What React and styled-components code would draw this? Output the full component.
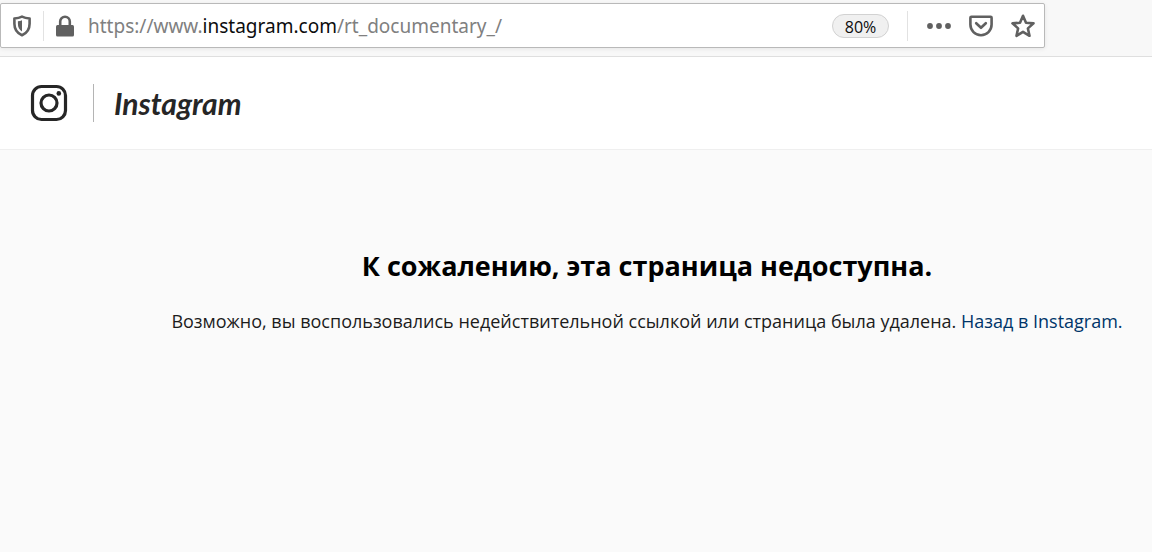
import React, { useState } from 'react'
import styled, { createGlobalStyle } from 'styled-components'

const GlobalStyle = createGlobalStyle`
    * {
        box-sizing: border-box;
    }
    body {
        margin: 0;
        background: #fafafa;
        color: #000;
        font-family: "Open Sans", "Noto Sans", sans-serif;
    }
    button {
        padding: 0;
        border: 0;
        background: none;
        font: inherit;
        cursor: pointer;
    }
`

const Toolbar = styled.div`
    height: 57px;
    padding: 3px 107px 0 0;
    background: #f8f8f8;
    border-bottom: 1px solid #dfdfdf;
`
const UrlBar = styled.div`
    display: flex;
    align-items: center;
    height: 45px;
    padding: 0 0 0 10px;
    background: #fff;
    border: 1px solid #b9b9b9;
    border-radius: 2px;
    box-shadow: 0 1px 4px rgba(0, 0, 0, 0.08);
`
const IconButton = styled.button`
    display: flex;
    flex: none;
    align-items: center;
    justify-content: center;
    width: ${({ $width }) => $width}px;
    height: 32px;
    color: #606060;
`
const Separator = styled.span`
    flex: none;
    width: 1px;
    height: 30px;
    margin: 0 ${({ $after }) => $after}px 0 ${({ $before }) => $before}px;
    background: #e2e2e2;
`
const UrlField = styled.label`
    display: grid;
    flex: 1;
    min-width: 0;
    margin-left: 12px;
    font-family: "Noto Sans", "Open Sans", sans-serif;
    font-size: 19px;
    line-height: 28px;

    > * {
        grid-area: 1 / 1;
    }
`
const UrlText = styled.span`
    overflow: hidden;
    color: #808080;
    white-space: nowrap;
    visibility: ${({ $hidden }) => ($hidden ? 'hidden' : 'visible')};
`
const Domain = styled.span`
    color: #0c0c0d;
`
const UrlInput = styled.input`
    width: 100%;
    padding: 0;
    border: 0;
    outline: 0;
    background: transparent;
    color: #0c0c0d;
    font: inherit;
`
const ZoomButton = styled.button`
    && {
        flex: none;
        width: 57px;
        height: 24px;
        background: #f0f0f0;
        border: 1px solid #d2d2d2;
        border-radius: 12px;
        color: #0c0c0d;
        font-size: 16px;
        line-height: 24px;
    }
`

const SiteHeader = styled.header`
    height: 93px;
    padding: 0 30px;
    background: #fff;
    border-bottom: 1px solid #efefef;
`
const HomeLink = styled.a`
    display: inline-flex;
    align-items: center;
    height: 92px;
    color: #262626;
    text-decoration: none;
`
const Divider = styled.span`
    width: 1px;
    height: 38px;
    margin: 0 20px 0 25px;
    background: #b4b4b4;
`
const Wordmark = styled.span`
    font-family: Lato, "Open Sans", sans-serif;
    font-size: 30px;
    font-style: italic;
    font-weight: 700;
    line-height: 36px;
`

const Main = styled.main`
    padding: 96px 0 0 142px;
    text-align: center;
`
const Title = styled.h1`
    margin: 0;
    font-size: 27px;
    font-weight: 700;
    line-height: 40px;
`
const Message = styled.p`
    margin: 21px 0 0;
    color: #1c1c1c;
    font-size: 18px;
    line-height: 28px;
`
const BackLink = styled.a`
    color: #003569;
    text-decoration: none;
`

const ShieldIcon = () => (
    <svg width="20" height="22" viewBox="0 0 20 22" fill="none" aria-hidden="true">
        <path
            d="M10 1.6c2.4 1.2 4.900 1.700 7.600 1.900v5.200c0 5.400-2.600 9.300-7.600 11.600C5 18 2.400 14.100 2.400 8.700V3.500C5.100 3.300 7.600 2.800 10 1.600z"
            stroke="currentColor"
            strokeWidth="2.6"
            strokeLinejoin="round"
        />
        <path d="M10 5.200v11.200c-2.800-1.800-4.100-4.300-4.100-7.700V6.200c1.500-.1 2.800-.4 4.100-1z" fill="currentColor" />
    </svg>
)

const LockIcon = () => (
    <svg width="20" height="22" viewBox="0 0 20 22" fill="none" aria-hidden="true">
        <rect x="1" y="10" width="18" height="11.5" rx="1.5" fill="currentColor" />
        <path d="M5.2 11V6.500a4.800 4.800 0 0 1 9.600 0V11" stroke="currentColor" strokeWidth="2.6" />
    </svg>
)

const DotsIcon = () => (
    <svg width="26" height="8" viewBox="0 0 26 8" fill="currentColor" aria-hidden="true">
        <circle cx="4" cy="4" r="2.9" />
        <circle cx="13" cy="4" r="2.9" />
        <circle cx="22" cy="4" r="2.9" />
    </svg>
)

const PocketIcon = () => (
    <svg
        width="26"
        height="24"
        viewBox="0 0 26 24"
        fill="none"
        stroke="currentColor"
        strokeWidth="2.6"
        strokeLinecap="round"
        strokeLinejoin="round"
        aria-hidden="true"
    >
        <path d="M3.4 2.700h19.200a1 1 0 0 1 1 1v6.900a10.600 10.600 0 0 1-21.200 0V3.700a1 1 0 0 1 1-1z" />
        <path d="M8.2 9.200l4.800 4.600 4.800-4.600" />
    </svg>
)

const StarIcon = () => (
    <svg width="26" height="26" viewBox="0 0 26 26" fill="none" aria-hidden="true">
        <path
            d="M13 2.800l3 6.900 7.500.7-5.600 5 1.600 7.400-6.500-3.900-6.500 3.900 1.600-7.400-5.600-5 7.500-.7z"
            stroke="currentColor"
            strokeWidth="2.6"
            strokeLinejoin="round"
        />
    </svg>
)

const CameraIcon = () => (
    <svg width="38" height="38" viewBox="0 0 38 38" fill="none" stroke="currentColor" aria-hidden="true">
        <rect x="2.5" y="2.5" width="33" height="33" rx="9" strokeWidth="3.2" />
        <circle cx="19" cy="19" r="8" strokeWidth="3.2" />
        <circle cx="28.8" cy="9.4" r="2.3" fill="currentColor" stroke="none" />
    </svg>
)

const url = { prefix: 'https://www.', domain: 'instagram.com', path: '/rt_documentary_/' }

// The domain is highlighted only while the field is not being edited
const AddressField = () => {
    const [editing, setEditing] = useState(false)
    const [value, setValue] = useState(url.prefix + url.domain + url.path)

    return (
        <UrlField>
            <UrlText $hidden={editing}>
                {url.prefix}<Domain>{url.domain}</Domain>{url.path}
            </UrlText>
            <UrlInput
                type="text"
                aria-label="Адрес"
                spellCheck={false}
                value={editing ? value : ''}
                onChange={e => setValue(e.target.value)}
                onFocus={() => setEditing(true)}
                onBlur={() => setEditing(false)}
            />
        </UrlField>
    )
}

const BrowserToolbar = () => (
    <Toolbar>
        <UrlBar>
            <IconButton type="button" $width={22} aria-label="Защита">
                <ShieldIcon />
            </IconButton>
            <Separator $before={10} $after={10} />
            <IconButton type="button" $width={22} aria-label="Соединение">
                <LockIcon />
            </IconButton>
            <AddressField />
            <ZoomButton type="button">80%</ZoomButton>
            <Separator $before={18} $after={10} />
            <IconButton type="button" $width={42} aria-label="Действия">
                <DotsIcon />
            </IconButton>
            <IconButton type="button" $width={42} aria-label="Pocket">
                <PocketIcon />
            </IconButton>
            <IconButton type="button" $width={42} aria-label="Закладка">
                <StarIcon />
            </IconButton>
        </UrlBar>
    </Toolbar>
)

const App = () => (
    <>
        <GlobalStyle />
        <BrowserToolbar />
        <SiteHeader>
            <HomeLink href="/">
                <CameraIcon />
                <Divider />
                <Wordmark>Instagram</Wordmark>
            </HomeLink>
        </SiteHeader>
        <Main>
            <Title>К сожалению, эта страница недоступна.</Title>
            <Message>
                Возможно, вы воспользовались недействительной ссылкой или страница была удалена.{' '}
                <BackLink href="/">Назад в Instagram.</BackLink>
            </Message>
        </Main>
    </>
)

export default App
